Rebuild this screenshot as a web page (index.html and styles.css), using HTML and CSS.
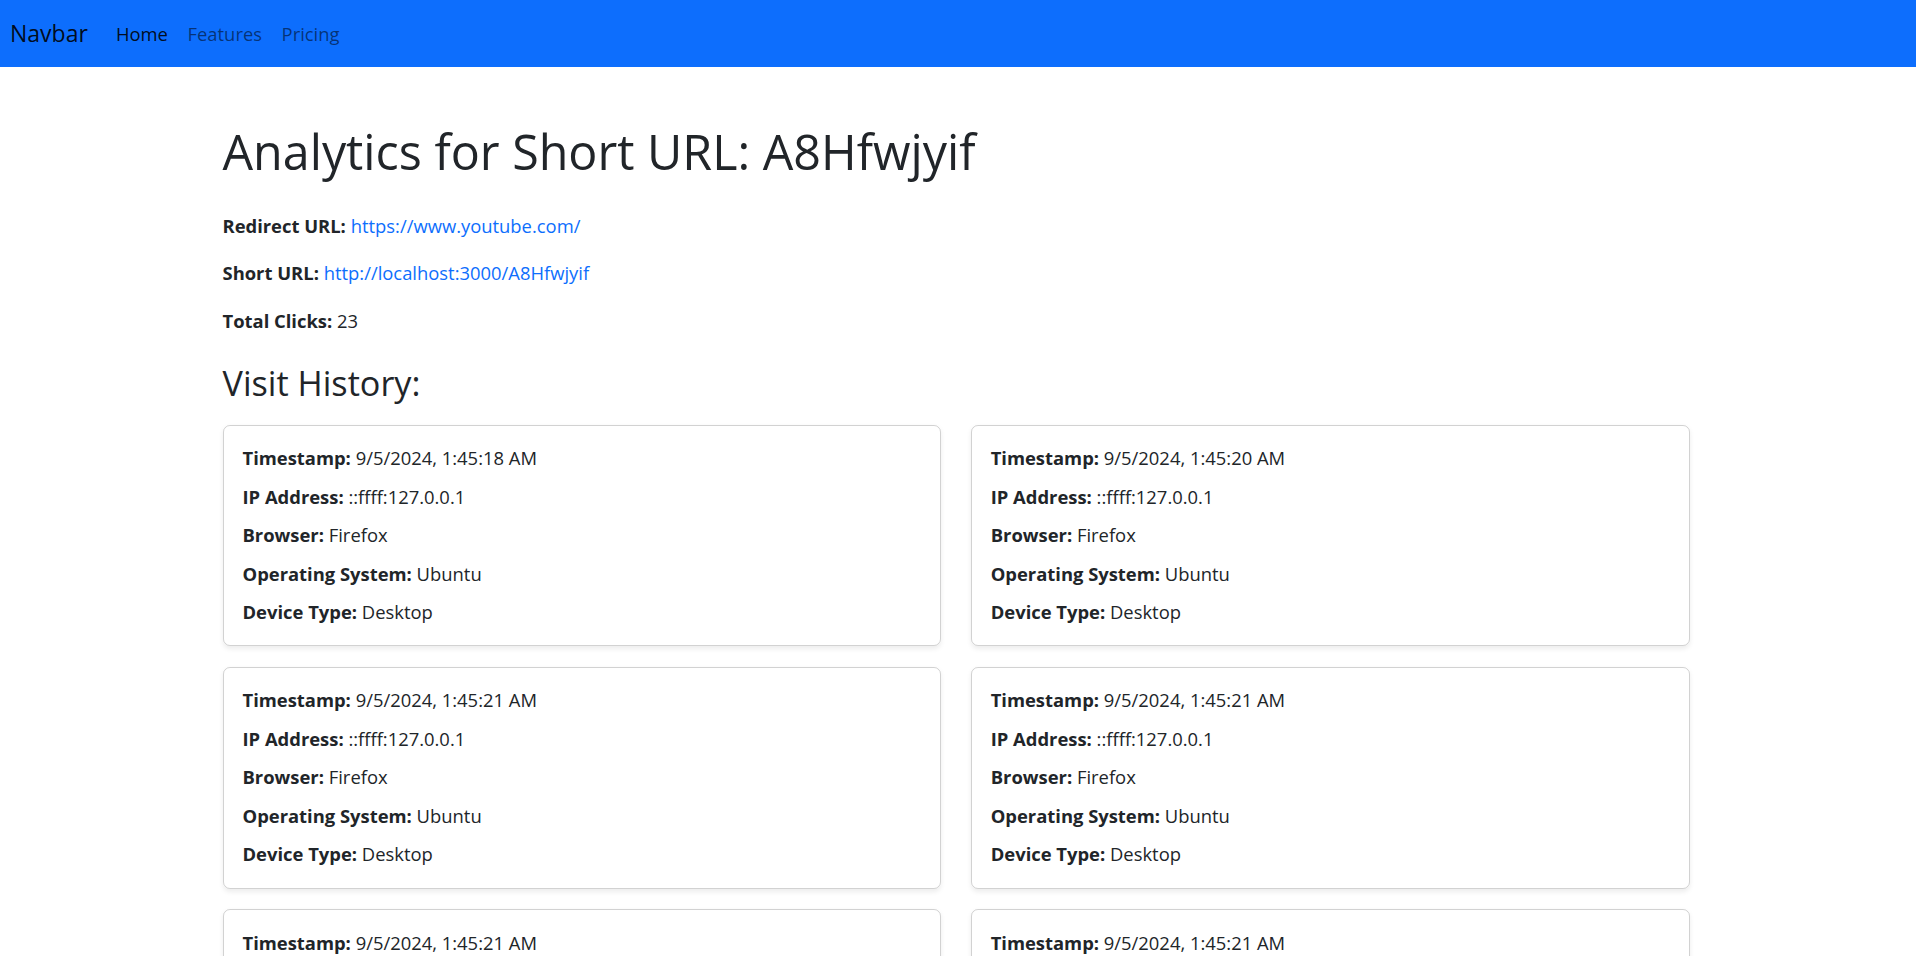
FILE: index.html
```html
<!DOCTYPE html>
<html lang="en">
<head>
<meta charset="utf-8">
<title>URL Analytics</title>
<link rel="stylesheet" href="styles.css">
</head>
<body>
<nav class="navbar">
  <a class="brand" href="#">Navbar</a>
  <ul class="nav">
    <li><a class="nav-link active" href="#">Home</a></li>
    <li><a class="nav-link" href="#">Features</a></li>
    <li><a class="nav-link" href="#">Pricing</a></li>
  </ul>
</nav>
<main class="page">
  <div class="container">
    <h1 class="title">Analytics for Short URL: A8Hfwjyif</h1>
    <div class="meta">
      <p><strong>Redirect URL:</strong> <a href="#">https://www.youtube.com/</a></p>
      <p><strong>Short URL:</strong> <a href="#">http://localhost:3000/A8Hfwjyif</a></p>
      <p><strong>Total Clicks:</strong> 23</p>
    </div>
    <h3 class="section-title">Visit History:</h3>
    <div class="grid">
      <div class="card">
        <p><strong>Timestamp:</strong> 9/5/2024, 1:45:18 AM</p>
        <p><strong>IP Address:</strong> ::ffff:127.0.0.1</p>
        <p><strong>Browser:</strong> Firefox</p>
        <p><strong>Operating System:</strong> Ubuntu</p>
        <p><strong>Device Type:</strong> Desktop</p>
      </div>
      <div class="card">
        <p><strong>Timestamp:</strong> 9/5/2024, 1:45:20 AM</p>
        <p><strong>IP Address:</strong> ::ffff:127.0.0.1</p>
        <p><strong>Browser:</strong> Firefox</p>
        <p><strong>Operating System:</strong> Ubuntu</p>
        <p><strong>Device Type:</strong> Desktop</p>
      </div>
      <div class="card">
        <p><strong>Timestamp:</strong> 9/5/2024, 1:45:21 AM</p>
        <p><strong>IP Address:</strong> ::ffff:127.0.0.1</p>
        <p><strong>Browser:</strong> Firefox</p>
        <p><strong>Operating System:</strong> Ubuntu</p>
        <p><strong>Device Type:</strong> Desktop</p>
      </div>
      <div class="card">
        <p><strong>Timestamp:</strong> 9/5/2024, 1:45:21 AM</p>
        <p><strong>IP Address:</strong> ::ffff:127.0.0.1</p>
        <p><strong>Browser:</strong> Firefox</p>
        <p><strong>Operating System:</strong> Ubuntu</p>
        <p><strong>Device Type:</strong> Desktop</p>
      </div>
      <div class="card">
        <p><strong>Timestamp:</strong> 9/5/2024, 1:45:21 AM</p>
        <p><strong>IP Address:</strong> ::ffff:127.0.0.1</p>
        <p><strong>Browser:</strong> Firefox</p>
        <p><strong>Operating System:</strong> Ubuntu</p>
        <p><strong>Device Type:</strong> Desktop</p>
      </div>
      <div class="card">
        <p><strong>Timestamp:</strong> 9/5/2024, 1:45:21 AM</p>
        <p><strong>IP Address:</strong> ::ffff:127.0.0.1</p>
        <p><strong>Browser:</strong> Firefox</p>
        <p><strong>Operating System:</strong> Ubuntu</p>
        <p><strong>Device Type:</strong> Desktop</p>
      </div>
    </div>
  </div>
</main>
</body>
</html>
```
FILE: styles.css
```css
* { box-sizing: border-box; }

body {
  margin: 0;
  font-family: "Open Sans", "Noto Sans", sans-serif;
  font-size: 18.4px;
  line-height: 29.3px;
  color: #212529;
  background: #fff;
}

a { color: #0d6efd; text-decoration: none; }
strong { font-weight: 700; }

.navbar {
  background: #0d6efd;
  height: 67px;
  display: flex;
  align-items: center;
  padding: 0 10px;
}

.brand {
  font-size: 23px;
  color: rgba(0, 0, 0, 0.9);
  margin-right: 18.3px;
}

.nav {
  display: flex;
  list-style: none;
  margin: 0;
  padding: 0;
}

.nav-link {
  display: block;
  padding: 0 9.8px;
  color: rgba(0, 0, 0, 0.55);
}

.nav-link.active { color: rgba(0, 0, 0, 0.9); }

.page {
  display: flex;
  justify-content: center;
  padding: 55px 4px 0 0;
}

.container { width: 1467px; }

.title {
  font-size: 48.4px;
  line-height: 58.7px;
  font-weight: 400;
  margin: 0 0 30px;
}

.meta p { margin: 0 0 18.4px; }

.section-title {
  font-size: 34.2px;
  line-height: 41px;
  font-weight: 400;
  margin: 26.5px 0 22px;
}

.grid {
  display: grid;
  grid-template-columns: 1fr 1fr;
  column-gap: 29.4px;
  row-gap: 20.7px;
}

.card {
  border: 1px solid rgba(0, 0, 0, 0.175);
  border-radius: 7px;
  box-shadow: 0 2.4px 4.9px rgba(0, 0, 0, 0.075);
  padding: 17.3px 19px 19px;
}

.card p { margin: 0 0 9.2px; }
.card p:last-child { margin-bottom: 0; }
```
